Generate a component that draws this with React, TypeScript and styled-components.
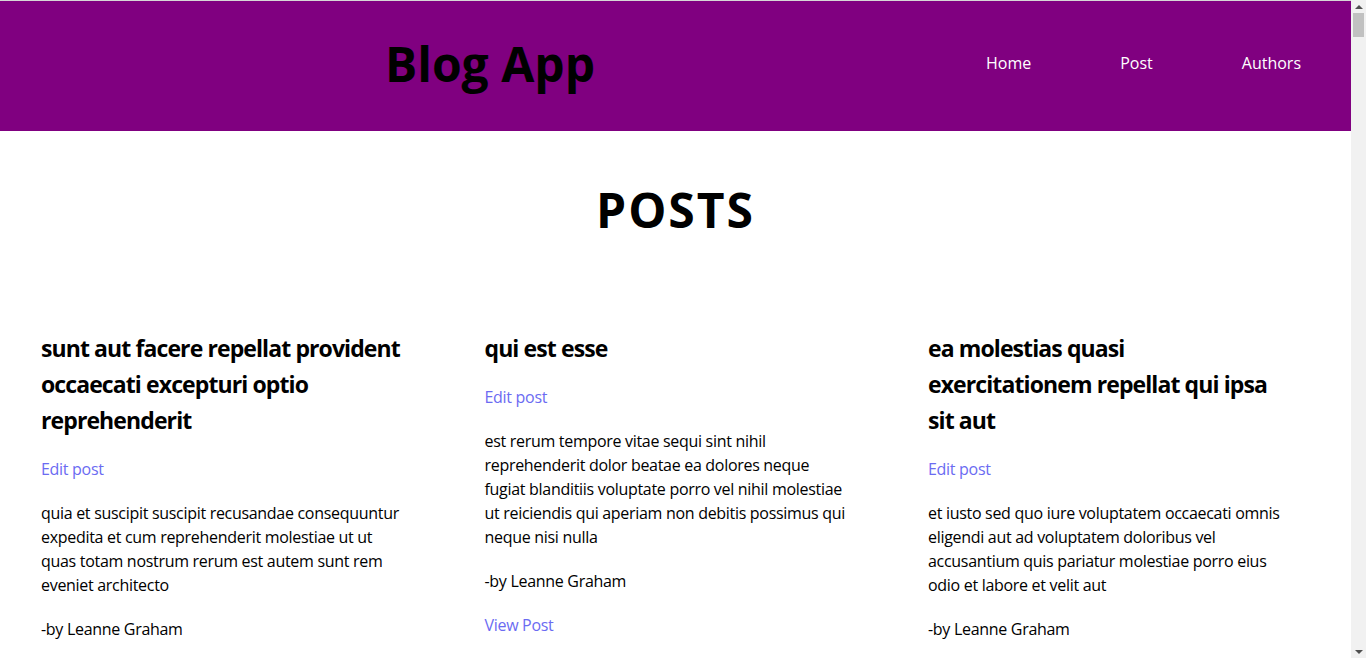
import * as React from "react";
import styled, { createGlobalStyle } from "styled-components";

type Post = {
  id: number;
  title: string;
  body: string;
  author: string;
};

const AUTHORS = [
  "Leanne Graham",
  "Ervin Howell",
  "Clementine Bauch",
  "Patricia Lebsack",
  "Chelsey Dietrich",
  "Mrs. Dennis Schulist",
  "Kurtis Weissnat",
  "Nicholas Runolfsdottir V",
  "Glenna Reichert",
  "Clementina DuBuque",
];

const SEED: { title: string; body: string }[] = [
  {
    title: "sunt aut facere repellat provident occaecati excepturi optio reprehenderit",
    body: "quia et suscipit suscipit recusandae consequuntur expedita et cum reprehenderit molestiae ut ut quas totam nostrum rerum est autem sunt rem eveniet architecto",
  },
  {
    title: "qui est esse",
    body: "est rerum tempore vitae sequi sint nihil reprehenderit dolor beatae ea dolores neque fugiat blanditiis voluptate porro vel nihil molestiae ut reiciendis qui aperiam non debitis possimus qui neque nisi nulla",
  },
  {
    title: "ea molestias quasi exercitationem repellat qui ipsa sit aut",
    body: "et iusto sed quo iure voluptatem occaecati omnis eligendi aut ad voluptatem doloribus vel accusantium quis pariatur molestiae porro eius odio et labore et velit aut",
  },
  {
    title: "eum et est occaecati",
    body: "ullam et saepe reiciendis voluptatem adipisci sit amet autem assumenda provident rerum culpa quis hic commodi nesciunt rem tenetur doloremque ipsam iure quis sunt voluptatem rerum illo velit",
  },
  {
    title: "nesciunt quas odio",
    body: "repudiandae veniam quaerat sunt sed alias aut fugiat sit autem sed est voluptatem omnis possimus esse voluptatibus quis est aut tenetur dolor neque",
  },
  {
    title: "dolorem eum magni eos aperiam quia",
    body: "ut aspernatur corporis harum nihil quis provident sequi mollitia nobis aliquid molestiae perspiciatis et ea nemo ab reprehenderit accusantium quas voluptate dolores velit et doloremque molestiae",
  },
  {
    title: "magnam facilis autem",
    body: "dolore placeat quibusdam ea quo vitae magni quis enim qui quis quo nemo aut saepe quidem repellat excepturi ut quia sunt ut sequi eos ea sed quas",
  },
  {
    title: "dolorem dolore est ipsam",
    body: "dignissimos aperiam dolorem qui eum facilis quibusdam animi sint suscipit qui sint possimus cum quaerat magni maiores excepturi ipsam ut commodi dolor voluptatum modi aut vitae",
  },
  {
    title: "nesciunt iure omnis dolorem tempora et accusantium",
    body: "consectetur animi nesciunt iure dolore enim quia ad veniam autem ut quam aut nobis et est aut quod aut provident voluptas autem voluptas",
  },
  {
    title: "optio molestias id quia eum",
    body: "quo et expedita modi cum officia vel magni doloribus qui repudiandae vero nisi sit quos veniam quod sed accusamus veritatis error",
  },
];

// 100 posts, 10 per author, like the api returns
const posts: Post[] = Array.from({ length: 100 }, (_, i) => ({
  id: i + 1,
  title: SEED[i % 10].title,
  body: SEED[i % 10].body,
  author: AUTHORS[Math.floor(i / 10)],
}));

const GlobalStyle = createGlobalStyle`
  html, body {
    margin: 0;
    padding: 0;
  }
  body {
    font-family: "Open Sans", "Noto Sans", sans-serif;
    color: #000;
    background: #fff;
  }
`;

const App: React.FC = () => {
  return (
    <Shell>
      <GlobalStyle />
      <Page>
        <Header>
          <Logo>Blog App</Logo>
          <Nav>
            <NavLink href="#">Home</NavLink>
            <NavLink href="#">Post</NavLink>
            <NavLink href="#">Authors</NavLink>
          </Nav>
        </Header>
        <Main>
          <PageTitle>POSTS</PageTitle>
          <PostGrid>
            {posts.map(post => (
              <Card key={post.id}>
                <PostTitle>{post.title}</PostTitle>
                <TextLink href="#">Edit post</TextLink>
                <Body>{post.body}</Body>
                <Author>-by {post.author}</Author>
                <TextLink href="#">View Post</TextLink>
              </Card>
            ))}
          </PostGrid>
        </Main>
      </Page>
      <ScrollRail aria-hidden>
        <ScrollArrow $dir="up" />
        <ScrollThumb />
        <ScrollArrow $dir="down" />
      </ScrollRail>
    </Shell>
  );
};

const Shell = styled.div`
  display: flex;
  align-items: flex-start;
`;

const Page = styled.div`
  flex: 1;
  min-width: 0;
`;

// the window's scrollbar, as it shows in the screenshot
const ScrollRail = styled.div`
  position: sticky;
  top: 0;
  display: flex;
  flex-direction: column;
  align-items: center;
  width: 15px;
  height: 100vh;
  padding: 5px 0 4px;
  box-sizing: border-box;
  background: #f1f1f1;
`;

const ScrollArrow = styled.div<{ $dir: "up" | "down" }>`
  width: 0;
  height: 0;
  border-left: 4px solid transparent;
  border-right: 4px solid transparent;
  ${p =>
    p.$dir === "up"
      ? "border-bottom: 4px solid #505050;"
      : "border-top: 4px solid #505050; margin-top: auto;"}
`;

const ScrollThumb = styled.div`
  width: 11px;
  height: 24px;
  margin-top: 4px;
  background: #c1c1c1;
`;

const Header = styled.header`
  display: flex;
  align-items: center;
  justify-content: space-between;
  height: 130px;
  padding: 0 50px 0 385px;
  border-top: 1px solid #d6d6d6;
  background: #800080;
`;

const Logo = styled.h1`
  margin: -4px 0 0;
  font-size: 48px;
  font-weight: 700;
  line-height: 1;
  color: #000;
`;

const Nav = styled.nav`
  display: flex;
  gap: 89px;
  margin-top: -7px;
`;

const NavLink = styled.a`
  font-size: 16px;
  color: #fff;
  text-decoration: none;
`;

const Main = styled.main`
  padding: 50px 0 40px;
`;

const PageTitle = styled.h1`
  margin: 0 0 91px;
  text-align: center;
  font-size: 48px;
  font-weight: 700;
  line-height: 58px;
  letter-spacing: 2px;
`;

const PostGrid = styled.div`
  display: grid;
  grid-template-columns: repeat(3, 370px);
  column-gap: 73.5px;
  row-gap: 40px;
  padding-left: 41px;
`;

const Card = styled.article`
  display: flex;
  flex-direction: column;
  align-items: flex-start;
  gap: 20px;
`;

const PostTitle = styled.h2`
  max-width: 360px;
  margin: 0 0 -1px;
  font-size: 23px;
  font-weight: 700;
  line-height: 36px;
  letter-spacing: -0.9px;
`;

const TextLink = styled.a`
  font-size: 16px;
  line-height: 24px;
  color: #6b6bf2;
  text-decoration: none;
  letter-spacing: -0.3px;
`;

const Body = styled.p`
  max-width: 366px;
  margin: 0;
  font-size: 16px;
  line-height: 24px;
  letter-spacing: -0.3px;
`;

const Author = styled.p`
  margin: 0;
  font-size: 16px;
  line-height: 24px;
  letter-spacing: -0.3px;
`;

export default App;
